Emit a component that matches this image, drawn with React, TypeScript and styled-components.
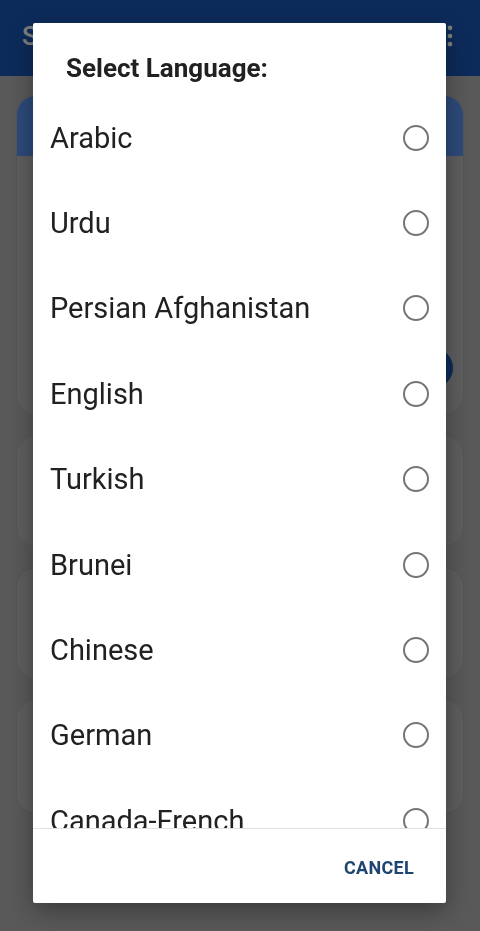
import React from "react";
import styled, { createGlobalStyle } from "styled-components";

const languages = [
    "Arabic",
    "Urdu",
    "Persian Afghanistan",
    "English",
    "Turkish",
    "Brunei",
    "Chinese",
    "German",
    "Canada-French",
    "Spanish",
];

const GlobalStyle = createGlobalStyle`
    html, body {
        margin: 0;
        padding: 0;
        background: #b2b2b2;
        font-family: Roboto, "Noto Sans", Arial, sans-serif;
    }
`;

export default function App() {
    return (
        <>
            <GlobalStyle />
            <Screen>
                <AppBar>
                    <AppTitle>Settings</AppTitle>
                    <MoreIcon viewBox="0 0 24 24">
                        <circle cx="12" cy="5" r="2" />
                        <circle cx="12" cy="12" r="2" />
                        <circle cx="12" cy="19" r="2" />
                    </MoreIcon>
                </AppBar>
                <Content>
                    <Card height={320}>
                        <CardHeader />
                        <CardFab />
                    </Card>
                    <Card height={112} />
                    <Card height={112} />
                    <Card height={115} />
                </Content>
            </Screen>
            <Scrim>
                <Dialog>
                    <DialogTitle>Select Language:</DialogTitle>
                    <OptionList>
                        {languages.map((lang) => (
                            <Option key={lang}>
                                <OptionLabel>{lang}</OptionLabel>
                                <Radio />
                            </Option>
                        ))}
                    </OptionList>
                    <Footer>
                        <TextButton>CANCEL</TextButton>
                    </Footer>
                </Dialog>
            </Scrim>
        </>
    );
}

const Screen = styled.div`
    width: 480px;
    height: 931px;
    overflow: hidden;
    background: #b2b2b2;
    display: flex;
    flex-direction: column;
`;

const AppBar = styled.header`
    height: 76px;
    flex: 0 0 76px;
    background: #1a56b4;
    display: flex;
    align-items: center;
    justify-content: space-between;
    padding: 0 16px 0 22px;
    box-sizing: border-box;
`;

const AppTitle = styled.span`
    color: #ffffff;
    font-size: 26px;
    font-weight: 500;
    margin-top: -4px;
`;

const MoreIcon = styled.svg`
    width: 28px;
    height: 28px;
    fill: #ffffff;
    margin-top: -4px;
`;

const Content = styled.main`
    display: flex;
    flex-direction: column;
    gap: 20px;
    padding: 19px 16px;
`;

const Card = styled.section<{ height: number }>`
    position: relative;
    height: ${(p) => p.height}px;
    border-radius: 20px;
    background: #bcbcbc;
    border: 1px solid #ababab;
    box-sizing: border-box;
    overflow: hidden;
`;

const CardHeader = styled.div`
    height: 60px;
    background: #5a94f4;
`;

const CardFab = styled.div`
    position: absolute;
    right: 10px;
    bottom: 26px;
    width: 40px;
    height: 40px;
    border-radius: 50%;
    background: #1a56b4;
`;

const Scrim = styled.div`
    position: fixed;
    inset: 0;
    background: rgba(0, 0, 0, 0.5);
    display: flex;
    justify-content: center;
    padding-top: 23px;
    box-sizing: border-box;
`;

const Dialog = styled.div`
    width: 413px;
    height: 880px;
    margin-left: -1px;
    background: #ffffff;
    border-radius: 2px;
    box-shadow: 0 8px 24px rgba(0, 0, 0, 0.35);
    display: flex;
    flex-direction: column;
    overflow: hidden;
`;

const DialogTitle = styled.h2`
    margin: 0;
    height: 72px;
    flex: 0 0 72px;
    box-sizing: border-box;
    padding: 32px 0 0 33px;
    font-size: 26px;
    font-weight: 700;
    color: #212121;
    line-height: 1;
`;

const OptionList = styled.div`
    flex: 1;
    overflow: hidden;
`;

const Option = styled.label`
    height: 85.4px;
    display: flex;
    align-items: center;
    justify-content: space-between;
    padding: 0 17px;
`;

const OptionLabel = styled.span`
    font-size: 29px;
    color: #212121;
`;

const Radio = styled.span`
    width: 26px;
    height: 26px;
    box-sizing: border-box;
    border: 2.5px solid #757575;
    border-radius: 50%;
`;

const Footer = styled.div`
    height: 75px;
    flex: 0 0 75px;
    border-top: 1px solid #e2e2e2;
    display: flex;
    justify-content: flex-end;
    align-items: center;
    padding: 2px 32px 0 0;
    box-sizing: border-box;
`;

const TextButton = styled.button`
    border: none;
    background: none;
    padding: 0;
    font-family: Roboto, Arial, sans-serif;
    font-size: 18px;
    font-weight: 700;
    letter-spacing: 0.3px;
    color: #1e4470;
`;
